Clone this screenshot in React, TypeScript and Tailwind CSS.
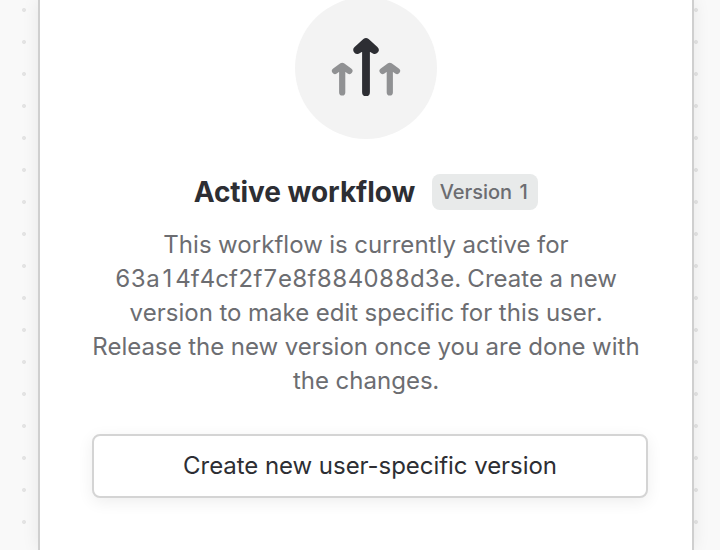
function ArrowsIcon() {
  return (
    <svg width="72" height="62" viewBox="0 0 72 62" fill="none" strokeLinecap="round" strokeLinejoin="round">
      <g stroke="#909193" strokeWidth="6.2">
        <path d="M12.2 55.4V31M5 34L12.2 28.8L19.4 34" />
        <path d="M59.8 55.4V31M52.6 34L59.8 28.8L67 34" />
      </g>
      <path stroke="#2d2e33" strokeWidth="7.8" d="M36 55.2V11M27.2 13L36 5L44.8 13L36 8Z" />
    </svg>
  );
}

/** The plain, footless numeral one, centred in a tabular-width cell. */
function One() {
  return <span className="inline-block w-[0.64em] text-center normal-nums">1</span>;
}

export default function App() {
  return (
    <div className="flex h-[550px] w-[720px] overflow-hidden bg-[#f9f9f9] bg-[radial-gradient(circle_at_center,#e4e4e4_1.7px,transparent_2.3px)] bg-[length:32px_32px] bg-[position:8px_-6px] pl-[38px] font-[Inter,sans-serif]">
      <main className="flex h-[550px] w-[656px] shrink-0 flex-col border-x-2 border-[#cfcfcf] bg-white px-[52px] shadow-[0_0_16px_rgba(0,0,0,0.08)]">
        <div className="-mt-[3px] flex h-[142px] w-[142px] shrink-0 items-center justify-center self-center rounded-full bg-[#f3f3f3]">
          <ArrowsIcon />
        </div>
        <div className="mt-[35px] flex h-9 items-center justify-center gap-[17px]">
          <h1 className="text-[28px] font-bold leading-9 tracking-[-0.04px] text-[#2d2e33]">Active workflow</h1>
          <span className="h-9 w-[106px] whitespace-nowrap rounded-lg bg-[#e8eaea] pl-[7.5px] text-[20px] font-medium leading-9 tabular-nums tracking-[-0.05px] text-[#6c6d71]">Version <One /></span>
        </div>
        <p className="mt-[18px] whitespace-nowrap text-center text-[24px] leading-[34px] tracking-[0.03px] tabular-nums text-[#6c6d71]">
          This workflow is currently active for<br />
          63a<One />4f4cf2f7e8f884088d3e. Create a new<br />
          version to make edit specific for this user.<br />
          Release the new version once you are done with<br />
          the changes.
        </p>
        <button className="mt-9 h-16 w-[556px] shrink-0 rounded-lg border-2 border-[#d4d4d4] bg-white text-[24px] leading-8 tracking-[-0.05px] text-[#2d2e33] shadow-[0_4px_16px_rgba(0,0,0,0.07)]">
          Create new user-specific version
        </button>
      </main>
    </div>
  );
}
